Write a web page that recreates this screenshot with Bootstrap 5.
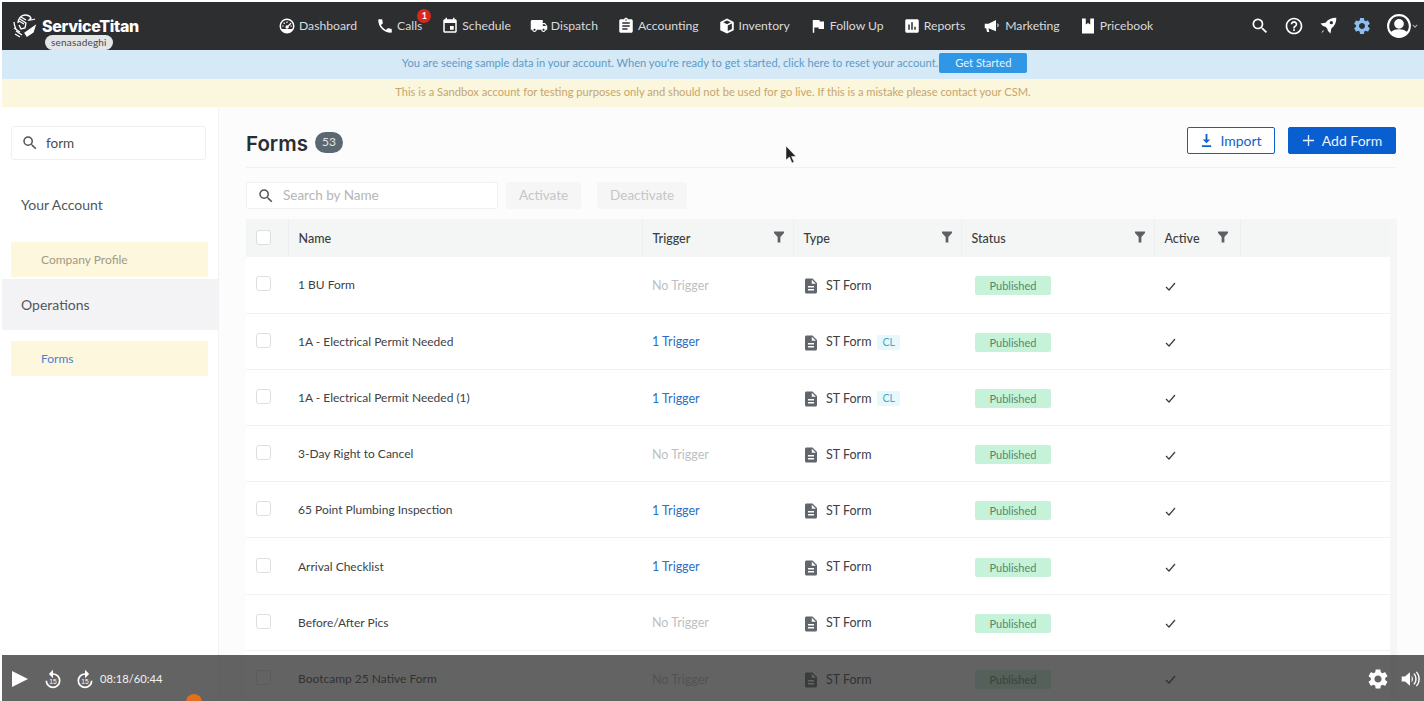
<!DOCTYPE html>
<html lang="en">
<head>
    <meta charset="UTF-8">
    <meta name="viewport" content="width=device-width, initial-scale=1.0">
    <title>Forms</title>
    <link href="https://cdn.jsdelivr.net/npm/bootstrap@5.3.3/dist/css/bootstrap.min.css" rel="stylesheet">
    <script src="https://cdn.jsdelivr.net/npm/bootstrap@5.3.3/dist/js/bootstrap.bundle.min.js"></script>
    <style>
        html, body {
            height: 701px;
            overflow: hidden;
        }
        body {
            background-color: #fff;
            font-family: "Lato", "Noto Sans", sans-serif;
            color: #3d4145;
            font-size: 13px;
        }
        .app-shell {
            position: relative;
            height: 701px;
            padding: 2px 0 0 2px;
            overflow: hidden;
        }
        .topbar {
            height: 48px;
            background-color: #2d2e30;
            color: #d9dadb;
        }
        .brand-box {
            width: 276px;
            padding-left: 10px;
            position: relative;
        }
        .brand-name {
            font-family: "Inter", sans-serif;
            font-weight: 800;
            font-size: 16px;
            color: #fff;
            letter-spacing: -.3px;
        }
        .brand-user {
            position: absolute;
            left: 43px;
            top: 33px;
            height: 15px;
            line-height: 15px;
            padding: 0 6px;
            border-radius: 8px;
            background-color: #e4e5e6;
            color: #45484b;
            font-size: 10px;
            letter-spacing: .2px;
        }
        .top-links {
            gap: 19px;
            margin-top: 1px;
        }
        .top-link {
            display: flex;
            align-items: center;
            gap: 3px;
            position: relative;
            font-size: 12.2px;
            white-space: nowrap;
        }
        .top-link svg {
            width: 18px;
            height: 18px;
            fill: #fff;
        }
        .calls-count {
            position: absolute;
            top: -8px;
            right: -9px;
            width: 14px;
            height: 14px;
            line-height: 14px;
            border-radius: 50%;
            background-color: #d9291c;
            color: #fff;
            font-size: 9px;
            font-weight: 700;
            text-align: center;
        }
        .top-tools {
            margin-left: auto;
            padding-right: 6px;
            gap: 14px;
        }
        .top-tools svg {
            width: 20px;
            height: 20px;
            fill: #fff;
        }
        .top-tools .tool-gear {
            fill: #8cbcf0;
        }
        .top-tools .tool-avatar {
            width: 26px;
            height: 26px;
        }
        .top-tools .tool-caret {
            width: 6px;
            height: 6px;
            fill: none;
            stroke: #aaa;
            stroke-width: 1.5;
        }
        .banner-blue {
            height: 29px;
            padding: 0 0 3px 3px;
            background-color: #d6e9f7;
            color: #5e9bc6;
            font-size: 11.15px;
        }
        .banner-yellow {
            height: 28px;
            padding-bottom: 2px;
            background-color: #fbf6de;
            color: #c7a56c;
            font-size: 11.15px;
        }
        .btn-started {
            width: 88px;
            height: 20px;
            padding: 0;
            margin-left: 1px;
            background-color: #2f97e6;
            border: 0;
            border-radius: 2px;
            color: #e8f4fd;
            font-size: 11.15px;
            line-height: 20px;
        }
        .side-panel {
            width: 217px;
            flex: none;
            border-right: 1px solid #f3f3f4;
            height: 594px;
            padding-top: 19px;
        }
        .side-search {
            width: 195px;
            height: 34px;
            margin-left: 9px;
            border: 1px solid #eff0f1;
            border-radius: 3px;
            padding-left: 9px;
            gap: 7px;
            font-size: 13.5px;
            color: #4a4d50;
        }
        .side-search svg, .table-search svg {
            width: 18px;
            height: 18px;
            fill: #53575a;
            flex: none;
        }
        .side-head {
            display: flex;
            align-items: center;
            padding-left: 19px;
            font-size: 14px;
            color: #53575a;
        }
        .head-account {
            height: 82px;
            padding-top: 6px;
        }
        .head-operations {
            height: 51px;
            margin-top: 2px;
            background-color: #f3f3f5;
        }
        .side-item {
            display: flex;
            align-items: center;
            width: 197px;
            height: 35px;
            margin-left: 9px;
            padding-left: 30px;
            background-color: #fdf7dd;
            font-size: 12px;
        }
        .item-profile {
            color: #a19a84;
        }
        .item-forms {
            margin-top: 11px;
            padding-top: 1px;
            color: #4f80d0;
        }
        .page-area {
            flex: 1;
            min-width: 0;
            background-color: #fcfcfc;
            padding-left: 27px;
            padding-right: 28px;
        }
        .page-head {
            height: 61px;
            padding-top: 6px;
            border-bottom: 1px solid #f0f1f1;
        }
        .title-group {
            margin-top: 8px;
        }
        .page-title {
            margin: 0;
            font-family: "Inter", "Lato", sans-serif;
            font-size: 20.5px;
            font-weight: 600;
            color: #2b2e31;
        }
        .title-count {
            height: 21px;
            padding: 0 7px;
            line-height: 20px;
            margin-left: 7px;
            margin-top: -4px;
            border-radius: 11px;
            background-color: #5b6872;
            color: #e3e6e8;
            font-size: 12px;
        }
        .head-actions {
            gap: 13px;
        }
        .btn-import, .btn-add {
            height: 27px;
            padding: 0;
            display: flex;
            align-items: center;
            justify-content: center;
            gap: 7px;
            border-radius: 2px;
            font-size: 14px;
        }
        .btn-import {
            width: 88px;
            background-color: #fff;
            border: 1px solid #0f5fc9;
            color: #1262cc;
        }
        .btn-add {
            width: 108px;
            background-color: #0a5fd0;
            border: 1px solid #0a5fd0;
            color: #e9f1fc;
        }
        .btn-import svg, .btn-add svg {
            width: 13px;
            height: 13px;
            fill: currentColor;
        }
        .tool-row {
            padding-top: 14px;
            height: 51px;
        }
        .table-search {
            width: 252px;
            height: 27px;
            background-color: #fff;
            border: 1px solid #f0f1f2;
            border-radius: 3px;
            padding-left: 10px;
            gap: 8px;
            color: #b3b6b9;
            font-size: 13.5px;
        }
        .btn-muted {
            height: 27px;
            padding: 0 13px;
            background-color: #f6f6f6;
            border: 0;
            border-radius: 2px;
            color: #c4c6c8;
            font-size: 13.5px;
            line-height: 27px;
        }
        .table-box {
            width: 1151px;
            border-right: 7px solid #f6f6f6;
        }
        .forms-table {
            table-layout: fixed;
            width: 1144px;
            margin: 0;
            font-size: 12.5px;
            color: #3d4145;
        }
        .col-check { width: 42px; }
        .col-name { width: 354px; }
        .col-trigger { width: 151px; }
        .col-type { width: 168px; }
        .col-status { width: 193px; }
        .col-active { width: 86px; }
        .forms-table th {
            height: 38px;
            padding: 2px 0 0 10px;
            background-color: #f4f5f5;
            border-bottom: 0;
            border-right: 1px solid #eeeff0;
            font-weight: 500;
            font-size: 12.5px;
            color: #3a3d40;
            vertical-align: middle;
            position: relative;
        }
        .forms-table th.head-end {
            border-right: 0;
        }
        .forms-table td {
            height: 56.2px;
            padding: 3px 0 0 10px;
            background-color: #fff;
            border-bottom: 1px solid #f1f2f2;
            vertical-align: middle;
        }
        .forms-table td.form-name {
            padding-top: 1px;
            font-size: 12px;
        }
        .box-check {
            display: block;
            width: 15px;
            height: 15px;
            margin-top: -4px;
            background-color: #fff;
            border: 1px solid #dcdedf;
            border-radius: 3px;
        }
        .forms-table td .box-check {
            margin-top: -5px;
        }
        .funnel {
            position: absolute;
            top: 12px;
            right: 9px;
            width: 10px;
            height: 12px;
            fill: #5c6165;
        }
        .funnel-active {
            right: 12px;
        }
        .forms-table td.no-trigger {
            color: #bcbfc1;
        }
        .forms-table td.has-trigger {
            color: #2a6fc4;
        }
        .type-cell {
            display: flex;
            align-items: center;
            gap: 6px;
        }
        .type-cell svg {
            width: 18px;
            height: 18px;
            fill: #60666b;
            margin-left: -1px;
        }
        .tag-cl {
            padding: 0 5px;
            height: 15px;
            line-height: 15px;
            background-color: #e6f8fb;
            color: #48a9c4;
            border-radius: 2px;
            font-size: 10.5px;
        }
        .tag-status {
            display: inline-block;
            width: 76px;
            height: 19px;
            line-height: 19px;
            margin-left: 4px;
            background-color: #c7f2da;
            color: #4f8a6c;
            border-radius: 2px;
            font-size: 11px;
            text-align: center;
        }
        .tick {
            display: block;
            width: 11px;
            height: 11px;
            margin-left: 1px;
            stroke: #3a3d40;
            stroke-width: 1.2;
            fill: none;
        }
        .player-bar {
            position: absolute;
            left: 2px;
            right: 0;
            bottom: 0;
            height: 46px;
            padding-top: 2px;
            background-color: rgba(45, 45, 45, .74);
            color: #f2f2f2;
            font-size: 11.2px;
        }
        .player-bar svg {
            fill: #fff;
        }
        .player-bar text {
            font-family: "Liberation Sans", sans-serif;
            font-size: 8px;
            text-anchor: middle;
        }
        .ctl-play {
            margin-left: 9px;
        }
        .ctl-back {
            margin-left: 14px;
        }
        .ctl-forward {
            margin-left: 12px;
        }
        .player-time {
            margin-left: 5px;
        }
        .ctl-sound {
            margin: 0 4px 0 10px;
        }
        .player-dot {
            position: absolute;
            left: 184px;
            bottom: -9px;
            width: 16px;
            height: 16px;
            border-radius: 50%;
            background-color: #e2701c;
        }
        .mouse-arrow {
            position: absolute;
            left: 785px;
            top: 146px;
            width: 12px;
            height: 18px;
        }
    </style>
</head>
<body>
<svg width="0" height="0" class="d-block position-absolute">
    <symbol id="i-search" viewBox="0 0 24 24"><path d="M15.5 14h-.79l-.28-.27A6.47 6.47 0 0 0 16 9.5 6.5 6.5 0 1 0 9.5 16c1.61 0 3.09-.59 4.23-1.57l.27.28v.79l5 4.99L20.49 19l-4.99-5zm-6 0C7.01 14 5 11.99 5 9.5S7.01 5 9.5 5 14 7.01 14 9.5 11.99 14 9.5 14z"/></symbol>
    <symbol id="i-gear" viewBox="0 0 24 24"><path d="M19.14 12.94c.04-.3.06-.61.06-.94 0-.32-.02-.64-.07-.94l2.03-1.58a.49.49 0 0 0 .12-.61l-1.92-3.32a.488.488 0 0 0-.59-.22l-2.39.96c-.5-.38-1.03-.7-1.62-.94l-.36-2.54a.484.484 0 0 0-.48-.41h-3.84c-.24 0-.43.17-.47.41l-.36 2.54c-.59.24-1.13.57-1.62.94l-2.39-.96c-.22-.08-.47 0-.59.22L2.74 8.87c-.12.21-.08.47.12.61l2.03 1.58c-.05.3-.09.63-.09.94s.02.64.07.94l-2.03 1.58a.49.49 0 0 0-.12.61l1.92 3.32c.12.22.37.29.59.22l2.39-.96c.5.38 1.03.7 1.62.94l.36 2.54c.05.24.24.41.48.41h3.84c.24 0 .44-.17.47-.41l.36-2.54c.59-.24 1.13-.56 1.62-.94l2.39.96c.22.08.47 0 .59-.22l1.92-3.32c.12-.22.07-.47-.12-.61l-2.01-1.58zM12 15.6c-1.98 0-3.6-1.62-3.6-3.6s1.62-3.6 3.6-3.6 3.6 1.62 3.6 3.6-1.62 3.6-3.6 3.6z"/></symbol>
    <symbol id="i-doc" viewBox="0 0 24 24"><path d="M14 2H6c-1.1 0-1.99.9-1.99 2L4 20c0 1.1.89 2 1.99 2H18c1.1 0 2-.9 2-2V8l-6-6zm2 16H8v-2h8v2zm0-4H8v-2h8v2zm-3-5V3.5L18.5 9H13z"/></symbol>
    <symbol id="i-funnel" viewBox="0 0 11 12"><path d="M0 0h11v1.6L7 6v6H4V6L0 1.6z"/></symbol>
    <symbol id="i-tick" viewBox="0 0 11 11"><path d="M1 6l3 3 6-7"/></symbol>
</svg>
<div class="app-shell">
    <nav class="topbar d-flex align-items-center">
        <div class="brand-box d-flex align-items-center gap-1 h-100">
            <svg width="26" height="26" viewBox="0 0 26 26" fill="none" stroke="#fff" stroke-width="1.3">
                <path d="M6 10c0-4 3-8 7-8 3 0 5 1 6 3l-2 2c2 0 4 0 6-1"/>
                <path d="M8 6l6 4-1 5-4 1-2-4"/>
                <path d="M9 4l5 3M7 8l5 3"/>
                <path d="M2 9c0 3 1 5 2 7M4 18l6 4M3 21l5 3M2 15l6 4"/>
                <path d="M13 20l10-7-2 6-6 4z" fill="#fff"/>
            </svg>
            <span class="brand-name">ServiceTitan</span>
            <span class="brand-user">senasadeghi</span>
        </div>
        <div class="top-links d-flex align-items-center">
            <span class="top-link"><svg viewBox="0 0 24 24"><path fill-rule="evenodd" d="M12 2a10 10 0 1 0 0 20 10 10 0 0 0 0-20zm0 2a8 8 0 0 1 8 8c0 1.500-.4 2.900-1.100 4H5.100A8 8 0 0 1 12 4zm-.8 2h1.600v2h-1.600zM7 8l1.200-1 1.300 1.500-1.200 1zm9.800-.2l1.200 1-3.800 3.700a2.200 2.200 0 1 1-1.200-1.200zM5.500 11.200h2v1.600h-2zm11 0h2v1.600h-2z"/></svg>Dashboard</span>
            <span class="top-link"><svg viewBox="0 0 24 24"><path d="M6.620 10.790c1.440 2.830 3.760 5.140 6.590 6.590l2.200-2.200c.27-.27.670-.36 1.020-.24 1.120.37 2.330.57 3.570.57.55 0 1 .45 1 1V20c0 .55-.45 1-1 1-9.390 0-17-7.610-17-17 0-.55.45-1 1-1h3.500c.55 0 1 .45 1 1 0 1.250.2 2.450.57 3.570.11.35.03.74-.25 1.020l-2.200 2.200z"/></svg>Calls<span class="calls-count">1</span></span>
            <span class="top-link"><svg viewBox="0 0 24 24"><path d="M17 12h-5v5h5v-5zM16 1v2H8V1H6v2H5c-1.110 0-1.990.9-1.990 2L3 19c0 1.100.89 2 2 2h14c1.100 0 2-.9 2-2V5c0-1.100-.9-2-2-2h-1V1h-2zm3 18H5V8h14v11z"/></svg>Schedule</span>
            <span class="top-link"><svg viewBox="0 0 24 24"><path d="M20 8h-3V4H3c-1.100 0-2 .9-2 2v11h2c0 1.660 1.340 3 3 3s3-1.340 3-3h6c0 1.660 1.340 3 3 3s3-1.340 3-3h2v-5l-3-4zM6 18.500c-.83 0-1.500-.67-1.500-1.500s.67-1.500 1.500-1.500 1.500.67 1.500 1.500-.67 1.500-1.500 1.500zm13.500-9l1.960 2.500H17V9.500h2.500zm-1.500 9c-.83 0-1.500-.67-1.500-1.500s.67-1.500 1.500-1.500 1.500.67 1.500 1.500-.67 1.500-1.500 1.500z"/></svg>Dispatch</span>
            <span class="top-link"><svg viewBox="0 0 24 24"><path d="M19 3h-4.180C14.400 1.840 13.300 1 12 1c-1.300 0-2.400.84-2.820 2H5c-1.100 0-2 .9-2 2v14c0 1.100.9 2 2 2h14c1.100 0 2-.9 2-2V5c0-1.100-.9-2-2-2zm-7 0c.55 0 1 .45 1 1s-.45 1-1 1-1-.45-1-1 .45-1 1-1zm2 14H7v-2h7v2zm3-4H7v-2h10v2zm0-4H7V7h10v2z"/></svg>Accounting</span>
            <span class="top-link"><svg viewBox="0 0 24 24"><path fill-rule="evenodd" d="M12 2l9 4.500v11L12 22l-9-4.500v-11zm0 2.600L7 7l5 2.500L17 7zM13 11.300v7.400l5.500-2.800V8.600z"/></svg>Inventory</span>
            <span class="top-link"><svg viewBox="0 0 24 24"><path d="M14.400 6L14 4H5v17h2v-7h5.600l.4 2h7V6z"/></svg>Follow Up</span>
            <span class="top-link"><svg viewBox="0 0 24 24"><path d="M19 3H5c-1.100 0-2 .9-2 2v14c0 1.100.9 2 2 2h14c1.100 0 2-.9 2-2V5c0-1.100-.9-2-2-2zM9 17H7v-7h2v7zm4 0h-2V7h2v10zm4 0h-2v-4h2v4z"/></svg>Reports</span>
            <span class="top-link"><svg viewBox="0 0 24 24"><path d="M1 9h5l10-5v15L6 15l1 5H4l-1-5H1zM18 8c2 1 2 5 0 6z"/></svg>Marketing</span>
            <span class="top-link"><svg viewBox="0 0 24 24"><path d="M4 2h5v8l3-2 3 2V2h5v20H4z"/></svg>Pricebook</span>
        </div>
        <div class="top-tools d-flex align-items-center">
            <svg viewBox="0 0 24 24"><use href="#i-search"/></svg>
            <svg viewBox="0 0 24 24"><path d="M11 18h2v-2h-2v2zm1-16C6.480 2 2 6.480 2 12s4.480 10 10 10 10-4.480 10-10S17.520 2 12 2zm0 18c-4.410 0-8-3.590-8-8s3.590-8 8-8 8 3.590 8 8-3.590 8-8 8zm0-14c-2.210 0-4 1.790-4 4h2c0-1.100.9-2 2-2s2 .9 2 2c0 2-3 1.750-3 5h2c0-2.250 3-2.500 3-5 0-2.210-1.790-4-4-4z"/></svg>
            <svg viewBox="0 0 24 24"><path fill-rule="evenodd" d="M22 2c0 6-2 10-6 13l-1 6-3-3-1-3-2-2-3-1-3-3 6-1c3-4 7-6 13-6zm-6 4a2 2 0 1 0 0 4 2 2 0 0 0 0-4zM6 17l1 1-3 3z"/></svg>
            <svg viewBox="0 0 24 24" class="tool-gear"><use href="#i-gear"/></svg>
            <span class="d-flex align-items-center">
                <svg viewBox="0 0 24 24" class="tool-avatar"><path d="M12 1a11 11 0 1 0 0 22 11 11 0 0 0 0-22zm0 2a9 9 0 0 1 7.200 14.400C17.500 15.700 14.800 15 12 15s-5.500.7-7.200 2.400A9 9 0 0 1 12 3zm0 2.500a4.500 4.500 0 1 0 0 9 4.500 4.500 0 0 0 0-9z"/></svg>
                <svg viewBox="0 0 8 8" class="tool-caret"><path d="M1 2.500l3 3 3-3"/></svg>
            </span>
        </div>
    </nav>
    <div class="banner-blue d-flex align-items-center justify-content-center">
        <span>You are seeing sample data in your account. When you're ready to get started, click here to reset your account.</span>
        <button type="button" class="btn btn-started">Get Started</button>
    </div>
    <div class="banner-yellow d-flex align-items-center justify-content-center">
        This is a Sandbox account for testing purposes only and should not be used for go live. If this is a mistake please contact your CSM.
    </div>
    <div class="d-flex">
        <aside class="side-panel">
            <div class="side-search d-flex align-items-center">
                <svg><use href="#i-search"/></svg>
                <span>form</span>
            </div>
            <div class="side-head head-account">Your Account</div>
            <div class="side-item item-profile">Company Profile</div>
            <div class="side-head head-operations">Operations</div>
            <div class="side-item item-forms">Forms</div>
        </aside>
        <main class="page-area">
            <div class="page-head d-flex align-items-center justify-content-between">
                <div class="title-group d-flex align-items-center">
                    <h1 class="page-title">Forms</h1>
                    <span class="title-count">53</span>
                </div>
                <div class="head-actions d-flex">
                    <button type="button" class="btn btn-import"><svg viewBox="0 0 14 14"><path d="M6 0h2v6h3L7 10 3 6h3zM2 12h10v2H2z"/></svg>Import</button>
                    <button type="button" class="btn btn-add"><svg viewBox="0 0 14 14"><path d="M6.300 1h1.400v5.300H13v1.400H7.700V13H6.300V7.700H1V6.300h5.300z"/></svg>Add Form</button>
                </div>
            </div>
            <div class="tool-row d-flex align-items-start">
                <div class="table-search d-flex align-items-center">
                    <svg><use href="#i-search"/></svg>
                    <span>Search by Name</span>
                </div>
                <button type="button" class="btn btn-muted ms-2">Activate</button>
                <button type="button" class="btn btn-muted ms-3">Deactivate</button>
            </div>
            <div class="table-box">
                <table class="table forms-table">
                    <colgroup>
                        <col class="col-check"><col class="col-name"><col class="col-trigger"><col class="col-type"><col class="col-status"><col class="col-active"><col>
                    </colgroup>
                    <thead>
                        <tr>
                            <th><span class="box-check"></span></th>
                            <th>Name</th>
                            <th>Trigger<svg class="funnel"><use href="#i-funnel"/></svg></th>
                            <th>Type<svg class="funnel"><use href="#i-funnel"/></svg></th>
                            <th>Status<svg class="funnel"><use href="#i-funnel"/></svg></th>
                            <th>Active<svg class="funnel funnel-active"><use href="#i-funnel"/></svg></th>
                            <th class="head-end"></th>
                        </tr>
                    </thead>
                    <tbody>
                        <tr>
                            <td><span class="box-check"></span></td><td class="form-name">1 BU Form</td><td class="no-trigger">No Trigger</td>
                            <td><div class="type-cell"><svg><use href="#i-doc"/></svg>ST Form</div></td>
                            <td><span class="tag-status">Published</span></td><td><svg class="tick"><use href="#i-tick"/></svg></td><td></td>
                        </tr>
                        <tr>
                            <td><span class="box-check"></span></td><td class="form-name">1A - Electrical Permit Needed</td><td class="has-trigger">1 Trigger</td>
                            <td><div class="type-cell"><svg><use href="#i-doc"/></svg>ST Form<span class="tag-cl">CL</span></div></td>
                            <td><span class="tag-status">Published</span></td><td><svg class="tick"><use href="#i-tick"/></svg></td><td></td>
                        </tr>
                        <tr>
                            <td><span class="box-check"></span></td><td class="form-name">1A - Electrical Permit Needed (1)</td><td class="has-trigger">1 Trigger</td>
                            <td><div class="type-cell"><svg><use href="#i-doc"/></svg>ST Form<span class="tag-cl">CL</span></div></td>
                            <td><span class="tag-status">Published</span></td><td><svg class="tick"><use href="#i-tick"/></svg></td><td></td>
                        </tr>
                        <tr>
                            <td><span class="box-check"></span></td><td class="form-name">3-Day Right to Cancel</td><td class="no-trigger">No Trigger</td>
                            <td><div class="type-cell"><svg><use href="#i-doc"/></svg>ST Form</div></td>
                            <td><span class="tag-status">Published</span></td><td><svg class="tick"><use href="#i-tick"/></svg></td><td></td>
                        </tr>
                        <tr>
                            <td><span class="box-check"></span></td><td class="form-name">65 Point Plumbing Inspection</td><td class="has-trigger">1 Trigger</td>
                            <td><div class="type-cell"><svg><use href="#i-doc"/></svg>ST Form</div></td>
                            <td><span class="tag-status">Published</span></td><td><svg class="tick"><use href="#i-tick"/></svg></td><td></td>
                        </tr>
                        <tr>
                            <td><span class="box-check"></span></td><td class="form-name">Arrival Checklist</td><td class="has-trigger">1 Trigger</td>
                            <td><div class="type-cell"><svg><use href="#i-doc"/></svg>ST Form</div></td>
                            <td><span class="tag-status">Published</span></td><td><svg class="tick"><use href="#i-tick"/></svg></td><td></td>
                        </tr>
                        <tr>
                            <td><span class="box-check"></span></td><td class="form-name">Before/After Pics</td><td class="no-trigger">No Trigger</td>
                            <td><div class="type-cell"><svg><use href="#i-doc"/></svg>ST Form</div></td>
                            <td><span class="tag-status">Published</span></td><td><svg class="tick"><use href="#i-tick"/></svg></td><td></td>
                        </tr>
                        <tr>
                            <td><span class="box-check"></span></td><td class="form-name">Bootcamp 25 Native Form</td><td class="no-trigger">No Trigger</td>
                            <td><div class="type-cell"><svg><use href="#i-doc"/></svg>ST Form</div></td>
                            <td><span class="tag-status">Published</span></td><td><svg class="tick"><use href="#i-tick"/></svg></td><td></td>
                        </tr>
                    </tbody>
                </table>
            </div>
        </main>
    </div>
    <svg class="mouse-arrow" viewBox="0 0 12 18"><path d="M1 0v14l3.500-3 2.500 6 2-1-2.500-5.500H11z" fill="#222" stroke="#fff" stroke-width=".5"/></svg>
    <div class="player-bar d-flex align-items-center">
        <svg width="18" height="18" viewBox="0 0 18 18" class="ctl-play"><path d="M1 1l16 8-16 8z"/></svg>
        <svg width="20" height="20" viewBox="0 0 24 24" class="ctl-back"><path d="M12 5V1L7 6l5 5V7a7 7 0 1 1-7 7H3a9 9 0 1 0 9-9z"/><text x="12" y="18">15</text></svg>
        <svg width="20" height="20" viewBox="0 0 24 24" class="ctl-forward"><path d="M12 5V1l5 5-5 5V7a7 7 0 1 0 7 7h2a9 9 0 1 1-9-9z"/><text x="12" y="18">15</text></svg>
        <span class="player-time">08:18/60:44</span>
        <svg width="24" height="24" viewBox="0 0 24 24" class="ms-auto"><use href="#i-gear"/></svg>
        <svg width="20" height="20" viewBox="0 0 24 24" class="ctl-sound"><path d="M2 9h4l6-5v16l-6-5H2zM14 8c2 2 2 6 0 8zM17 5c4 3 4 11 0 14l-1-1c3-3 3-9 0-12zM20 3c5 4 5 14 0 18l-1-1c4-4 4-12 0-16z"/></svg>
        <span class="player-dot"></span>
    </div>
</div>
</body>
</html>
